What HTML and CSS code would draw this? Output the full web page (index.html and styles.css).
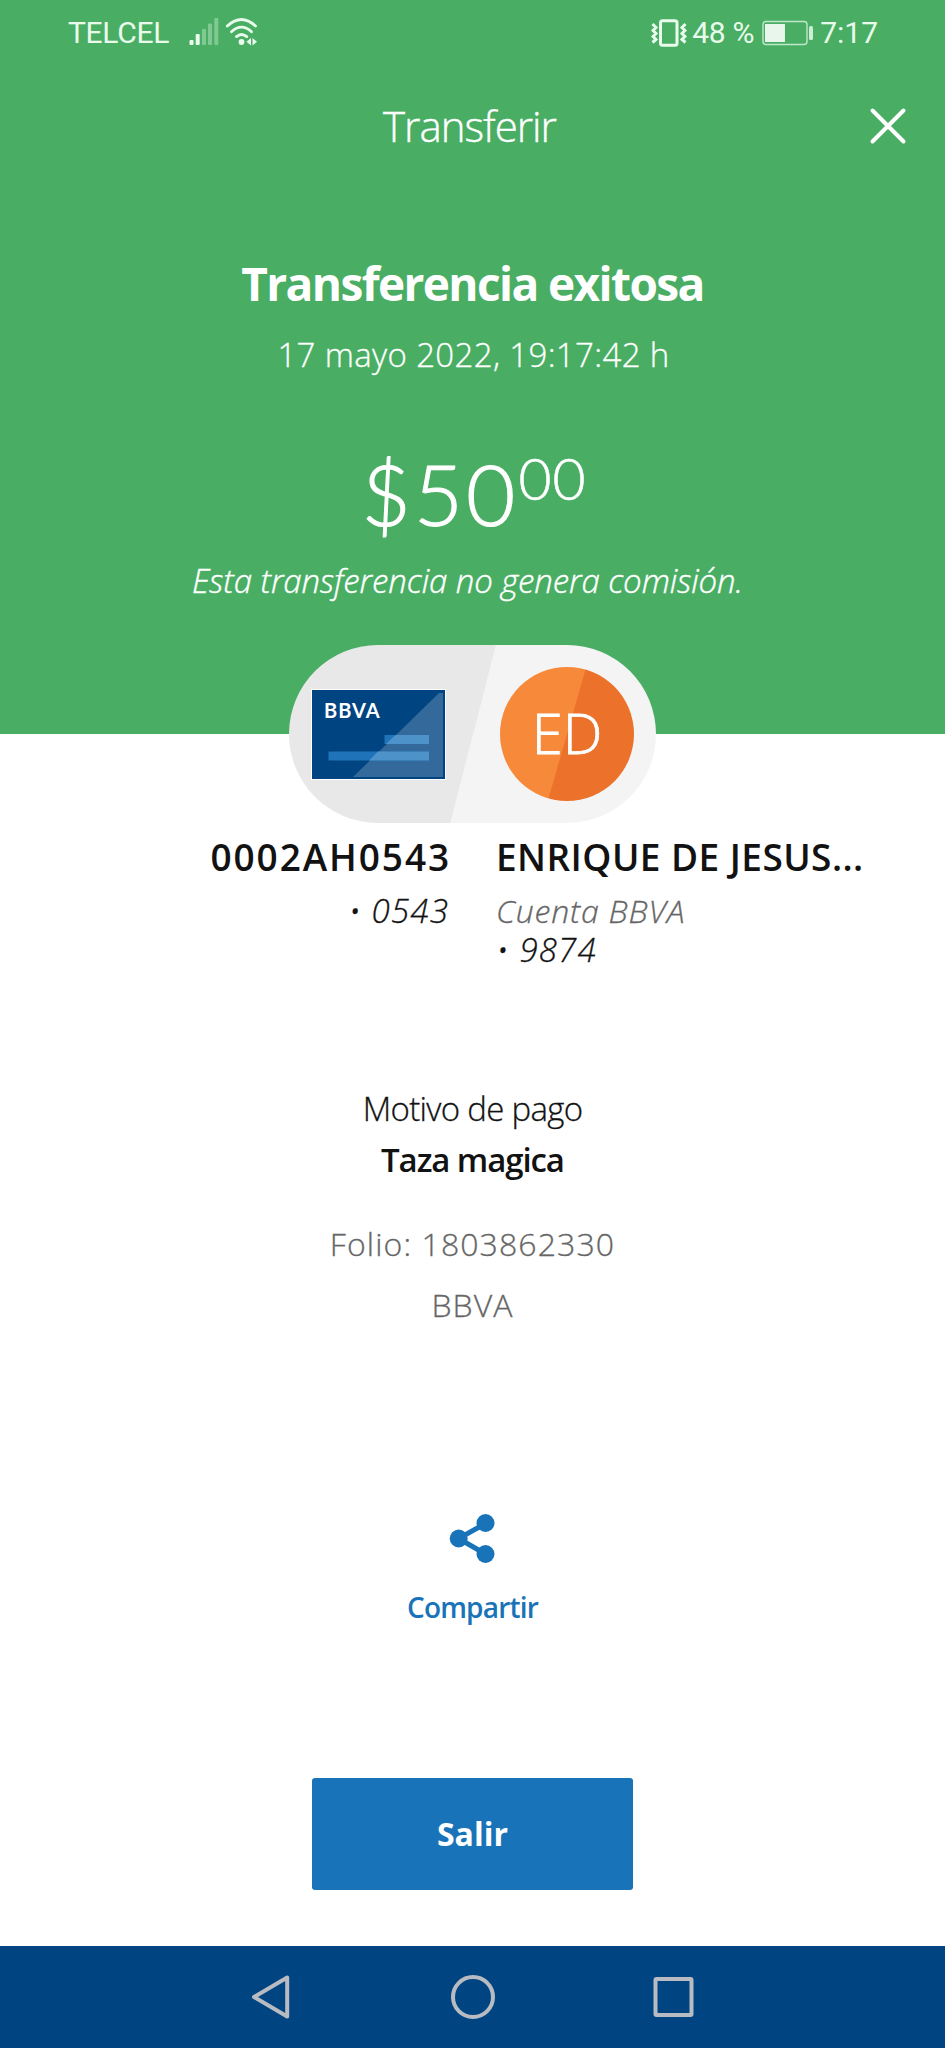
FILE: index.html
```html
<!DOCTYPE html>
<html lang="es">
<head>
<meta charset="utf-8">
<title>Transferir</title>
<link rel="stylesheet" href="styles.css">
</head>
<body>
<div class="screen">
  <header class="hero">
    <div class="status">
      <div class="status-left">
        <span class="carrier">TELCEL</span>
        <svg class="signal" width="30" height="28" viewBox="0 0 30 28" fill="#e9fbec">
          <rect x="0.5" y="22" width="4" height="5" rx="1"/>
          <rect x="6.7" y="16" width="4" height="11" rx="1"/>
          <g fill-opacity=".35"><rect x="13" y="11" width="4" height="16" rx="1"/><rect x="19" y="5.500" width="4" height="21.500" rx="1"/><rect x="25.300" y="0" width="4" height="27" rx="1"/></g>
        </svg>
        <svg class="wifi" width="34" height="28" viewBox="0 0 34 28" fill="none" stroke="#e9fbec" stroke-width="2.800" stroke-linecap="round">
          <path d="M2.300 8Q16.500-5 30.500 8M6.500 13.700Q16.500 4.500 26.500 13.700M11.500 18.600Q16.500 14.300 21.800 18.600"/>
          <circle cx="16.500" cy="24" r="2.900" fill="#e9fbec" stroke="none"/>
          <path d="M26 20v7.500L21.500 23.800ZM27.500 20v7.500L32 23.800Z" fill="#e9fbec" stroke="none"/>
        </svg>
      </div>
      <div class="status-right">
        <svg class="vibrate" width="36" height="28" viewBox="0 0 36 28" fill="none" stroke="#e9fbec" stroke-width="3">
          <rect x="9.500" y="1.800" width="16.500" height="24.400" rx="2"/>
          <path stroke-width="3" d="M1.500 5l3.500 3.500-3 3 3 3-3 3 3 3-3.500 3M34.500 5L31 8.500l3 3-3 3 3 3-3 3 3.500 3"/>
        </svg>
        <span class="percent">48 %</span>
        <svg class="battery" width="52" height="26" viewBox="0 0 52 26">
          <rect x="1" y="1.500" width="44" height="23" rx="3" fill="none" stroke="#bfe8c8" stroke-width="1.400"/>
          <rect x="3" y="4" width="20" height="18" fill="#e9f6ec"/>
          <rect x="47" y="6" width="4" height="14" rx="1.500" fill="#cdeed4"/>
        </svg>
        <span class="clock">7:17</span>
      </div>
    </div>
    <div class="titlebar">
      <span class="title">Transferir</span>
      <svg class="close" width="38" height="38" viewBox="0 0 38 38" stroke="#fff" stroke-width="4" stroke-linecap="round"><path d="M3.500 3.500l31 31M34.500 3.500l-31 31"/></svg>
    </div>
    <h1 class="headline">Transferencia exitosa</h1>
    <p class="date">17 mayo 2022, 19:17:42 h</p>
    <p class="amount">$50<span class="cents">00</span></p>
    <p class="fee">Esta transferencia no genera comisión.</p>
  </header>
  <main class="body">
    <div class="pill">
      <div class="card">
        <span class="brand">BBVA</span>
        <svg class="card-art" width="133" height="56" viewBox="0 33 133 56">
          <path d="M127 3h4v84H41Z" fill="#336a9b"/>
          <path d="M72.500 45H117v9H72.500zM16.500 61.500H117v9H16.500z" fill="#1f73b8"/>
          <path d="M83.500 45H117v9H74zM66 61.500H117v9H57z" fill="#4d93c9"/>
        </svg>
      </div>
      <div class="avatar">ED</div>
    </div>
    <div class="parties">
      <div class="from">
        <div class="name from-name">0002AH0543</div>
        <div class="acct">• 0543</div>
      </div>
      <div class="to">
        <div class="name to-name">ENRIQUE DE JESUS...</div>
        <div class="acct bank">Cuenta BBVA</div>
        <div class="acct">• 9874</div>
      </div>
    </div>
    <div class="reason">
      <div class="label">Motivo de pago</div>
      <div class="value">Taza magica</div>
    </div>
    <div class="folio">
      <div class="number">Folio: 1803862330</div>
      <div class="issuer">BBVA</div>
    </div>
    <div class="share">
      <svg width="46" height="50" viewBox="0 0 46 50" fill="#1973b8"><path d="M36.500 9.500L9.500 24.500l27 15.500" fill="none" stroke="#1973b8" stroke-width="5"/><circle cx="9.700" cy="24.500" r="9"/><circle cx="36.500" cy="9" r="9"/><circle cx="36.500" cy="40" r="9"/></svg>
      <span class="share-label">Compartir</span>
    </div>
    <button class="exit" type="button">Salir</button>
  </main>
  <nav class="navbar">
    <svg width="44" height="44" viewBox="0 0 44 44"><path d="M36.200 2.500v39L3 22Z"/></svg>
    <svg width="44" height="44" viewBox="0 0 44 44"><circle cx="22" cy="22" r="20"/></svg>
    <svg width="44" height="44" viewBox="0 0 44 44"><rect x="4.500" y="4" width="36" height="36" rx="1"/></svg>
  </nav>
</div>
</body>
</html>
```
FILE: styles.css
```css
* { box-sizing: border-box; }
body { margin: 0; background: #fff; font-family: "Open Sans", "Noto Sans", sans-serif; }
h1, p { margin: 0; }
svg { display: block; flex: none; }

.screen { width: 945px; height: 2048px; display: flex; flex-direction: column; }

.hero { height: 734px; flex: none; background: #49ae63; color: #fff; text-align: center; white-space: nowrap; }
.status { height: 65px; padding: 0 67px 0 68px; display: flex; justify-content: space-between; align-items: center; font-family: Roboto, sans-serif; font-size: 30px; color: #e9fbec; }
.status-left, .status-right { display: flex; align-items: center; }
.carrier { letter-spacing: -0.3px; }
.signal { margin-left: 20px; margin-bottom: 2px; }
.wifi { margin-left: 6px; margin-bottom: 2px; }
.percent { margin-left: 5px; letter-spacing: -0.3px; }
.battery { margin: 0 6px 0 8px; }

.titlebar { height: 118px; display: grid; grid-template-columns: 1fr auto 1fr; align-items: center; padding: 3px 38px 0; }
.title { grid-column: 2; font-size: 42px; font-weight: 300; letter-spacing: -1px; line-height: 60px; margin-left: -6px; -webkit-text-stroke: 0.4px; }
.close { justify-self: end; }
.headline { margin-top: 70px; font-size: 46px; line-height: 60px; font-weight: 700; letter-spacing: -1.6px; }
.date { margin-top: 22px; font-size: 33px; line-height: 40px; font-weight: 300; letter-spacing: 0.35px; padding-left: 2px; -webkit-text-stroke: 0.3px; }
.amount { margin-top: 68px; height: 100px; font-family: Lato, sans-serif; font-size: 85px; line-height: 100px; font-weight: 300; letter-spacing: 3px; padding-left: 3px; -webkit-text-stroke: 1.1px; }
.cents { font-size: 57px; line-height: 0; letter-spacing: 1px; position: relative; top: -26px; -webkit-text-stroke: 0.6px; }
.fee { margin-top: 18px; font-size: 33px; line-height: 40px; font-weight: 300; font-style: italic; letter-spacing: -0.08px; padding-right: 10px; -webkit-text-stroke: 0.4px; }

.body { flex: 1; display: flex; flex-direction: column; align-items: center; color: #121212; white-space: nowrap; }
.pill { width: 367px; height: 178px; flex: none; margin-top: -89px; border-radius: 89px; padding: 0 22px; display: flex; align-items: center; justify-content: space-between; background: linear-gradient(104.400deg, #e8e8e8 50%, #f4f4f4 50.300%); }
.card { width: 135px; height: 91px; border: 1px solid #fff; background: #004481; display: flex; flex-direction: column; }
.brand { height: 33px; padding: 8px 0 0 12px; font: 700 20px/24px Lato, sans-serif; letter-spacing: 1px; color: #fff; }
.card-art { overflow: visible; }
.avatar { width: 134px; height: 134px; border-radius: 50%; background: linear-gradient(106deg, #f7893b 49.700%, #ec712b 50.300%); color: #fff; font-size: 56px; line-height: 130px; text-align: center; font-weight: 300; -webkit-text-stroke: 0.8px; }

.parties { width: 100%; margin-top: 12px; display: grid; grid-template-columns: 449px 1fr; column-gap: 47px; }
.from { text-align: right; }
.name { font-size: 37px; line-height: 44px; font-weight: 600; margin-bottom: 13px; }
.from-name { letter-spacing: 1.9px; margin-right: -2px; }
.to-name { letter-spacing: 0.45px; }
.acct { font-size: 33px; line-height: 38.5px; font-weight: 300; font-style: italic; letter-spacing: 1.2px; -webkit-text-stroke: 0.3px; }
.bank { color: #666; font-size: 32px; letter-spacing: 0.8px; }

.reason { margin-top: 114px; text-align: center; font-size: 33px; line-height: 51px; }
.label { font-weight: 300; letter-spacing: -0.7px; -webkit-text-stroke: 0.3px; }
.value { font-weight: 600; letter-spacing: -1.1px; }
.folio { margin-top: 28px; text-align: center; font-size: 32px; line-height: 61px; font-weight: 300; letter-spacing: 1.1px; color: #666; -webkit-text-stroke: 0.3px; }
.share { margin-top: 179px; display: flex; flex-direction: column; align-items: center; color: #1973b8; }
.share-label { margin-top: 23px; font-size: 28px; line-height: 40px; font-weight: 600; letter-spacing: -0.8px; }
.exit { margin-top: 151px; width: 321px; height: 112px; flex: none; border: 0; border-radius: 3px; background: #1973b8; color: #fff; font: 700 32px "Open Sans", sans-serif; padding-bottom: 3px; }

.navbar { height: 102px; flex: none; background: #004481; display: flex; justify-content: center; align-items: center; gap: 156px; }
.navbar svg { fill: none; stroke: #b8bcc2; stroke-width: 4; stroke-linejoin: round; }
```
